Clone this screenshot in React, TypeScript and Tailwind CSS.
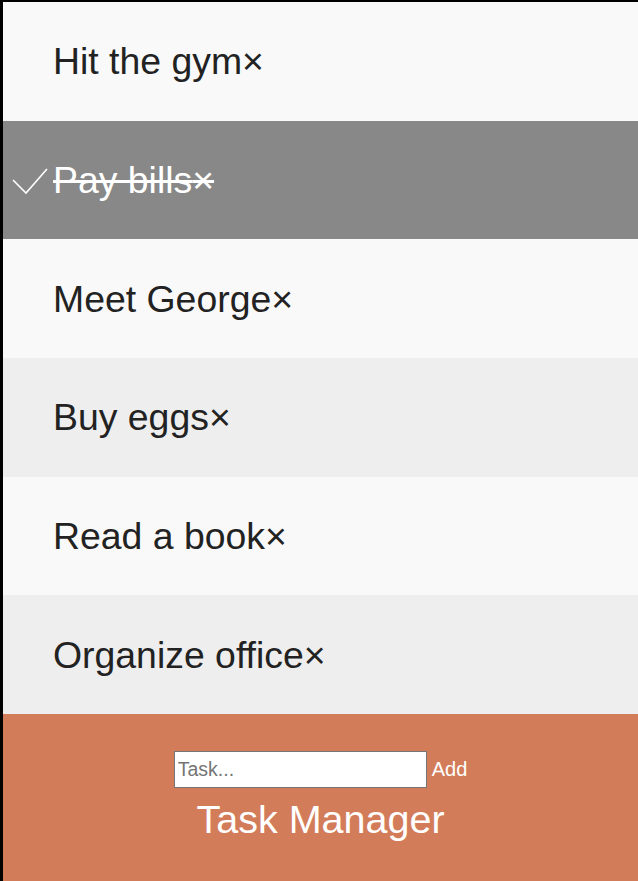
const tasks = [
  { text: 'Hit the gym', done: false },
  { text: 'Pay bills', done: true },
  { text: 'Meet George', done: false },
  { text: 'Buy eggs', done: false },
  { text: 'Read a book', done: false },
  { text: 'Organize office', done: false },
];

export default function App() {
  return (
    <div className="min-h-[881px] flex flex-col border-l-[3px] border-t-2 border-black font-['Liberation_Sans',Arial,sans-serif]">
      <ul>
        {tasks.map((task, idx) => (
          <li
            key={idx}
            className={
              'relative flex items-center h-[118.67px] pl-[50px] text-[37.4px] ' +
              (task.done
                ? 'bg-[#888888] text-white line-through'
                : idx % 2 === 0
                ? 'bg-[#f9f9f9] text-[#222222]'
                : 'bg-[#eeeeee] text-[#222222]')
            }
          >
            {task.done && (
              <svg className="absolute left-[9px] top-[46px] w-[36px] h-[28px]" viewBox="0 0 36 28" fill="none" stroke="white" strokeWidth="1.6">
                <path d="M1 13 L14 26 L35 2" />
              </svg>
            )}
            <span>
              {task.text}
              <span>×</span>
            </span>
          </li>
        ))}
      </ul>
      <div className="flex-1 bg-[#d37c5a] flex flex-col items-center pt-[37px]">
        <div className="flex items-center">
          <input
            type="text"
            placeholder="Task..."
            className="w-[253px] h-[37px] bg-white border border-[#767676] px-[3px] text-[19.5px] text-[#222] placeholder:text-[#757575] outline-none"
          />
          <span className="ml-[5px] text-[20px] text-white">Add</span>
        </div>
        <h2 className="mt-[9px] text-[39.5px] text-white leading-[45px]">Task Manager</h2>
      </div>
    </div>
  );
}
